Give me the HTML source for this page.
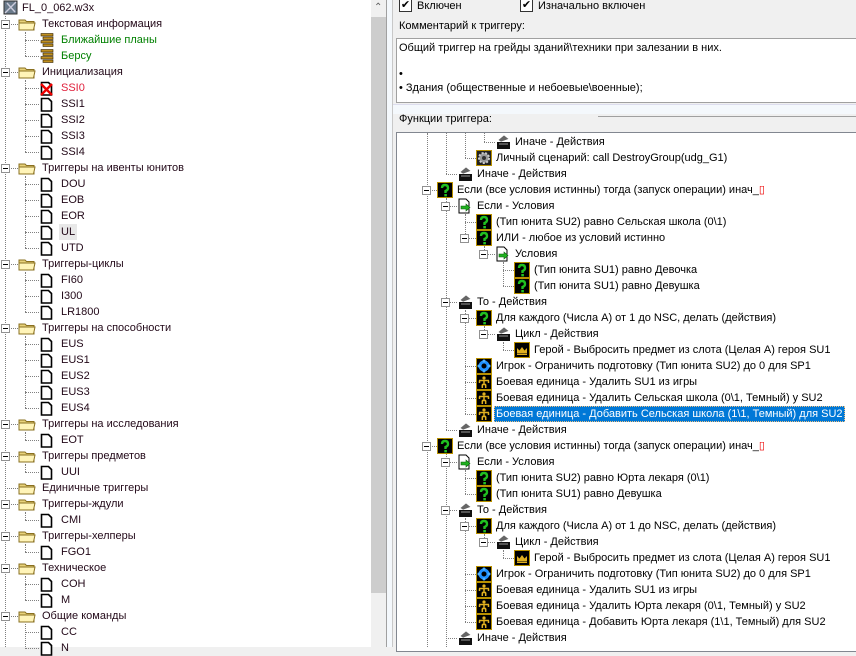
<!DOCTYPE html>
<html><head><meta charset="utf-8"><style>
*{margin:0;padding:0;box-sizing:border-box}
body{width:856px;height:647px;overflow:hidden;position:relative;background:#f0f0f0;font-family:"Liberation Sans",sans-serif;font-size:11px;color:#000}
.a{position:absolute}
.r{position:absolute;display:flex;align-items:center;height:16px;white-space:nowrap}
.r svg{width:16px;height:16px;flex:none}
.r span{margin-left:4px;line-height:16px}
.L{color:#220818}
.L span{margin-left:6px}
.v{position:absolute;width:0;border-left:1px dotted #808080}
.h{position:absolute;height:0;border-top:1px dotted #808080}
.b{position:absolute;width:9px;height:9px;border:1px solid #919191;background:#fff}
.b:after{content:"";position:absolute;left:1px;top:3px;width:5px;height:1px;background:#000}
</style></head><body>
<svg width="0" height="0" style="position:absolute"><defs>
<symbol id="q" viewBox="0 0 16 16"><rect width="16" height="16" fill="#b89000"/><rect x="1" y="1" width="14" height="14" fill="#000"/><path d="M5 6Q5 3 8 3Q11 3 11 6Q11 8 8.5 9V11" stroke="#20c020" stroke-width="2.4" fill="none"/><rect x="7.3" y="12" width="2.6" height="2.4" fill="#20c020"/></symbol>
<symbol id="u" viewBox="0 0 16 16"><rect width="16" height="16" fill="#b89000"/><rect x="1" y="1" width="14" height="14" fill="#000"/><circle cx="8" cy="4" r="1.6" fill="#e0b020"/><path d="M3 6.5H13M3.5 6.5V9M12.5 6.5V9M8 6V10.5M6 10.5H10M6.3 10.5V14M9.7 10.5V14" stroke="#e0b020" stroke-width="1.5" fill="none"/></symbol>
<symbol id="g" viewBox="0 0 16 16"><rect width="16" height="16" fill="#b89000"/><rect x="1" y="1" width="14" height="14" fill="#222"/><circle cx="8" cy="8" r="5" fill="#999" stroke="#ccc" stroke-dasharray="2 1.5" stroke-width="2"/><circle cx="8" cy="8" r="2" fill="#333"/></symbol>
<symbol id="p" viewBox="0 0 16 16"><rect width="16" height="16" fill="#b89000"/><rect x="1" y="1" width="14" height="14" fill="#000"/><circle cx="8" cy="8" r="4" fill="none" stroke="#1e90ff" stroke-width="3"/><circle cx="8" cy="3" r="1.5" fill="#4db0ff"/><circle cx="3" cy="8" r="1.5" fill="#4db0ff"/><circle cx="13" cy="8" r="1.5" fill="#4db0ff"/><circle cx="8" cy="13" r="1.5" fill="#4db0ff"/></symbol>
<symbol id="hr" viewBox="0 0 16 16"><rect width="16" height="16" fill="#b89000"/><rect x="1" y="1" width="14" height="14" fill="#000"/><path d="M3 11V6L5.5 8.5L8 5L10.5 8.5L13 6V11Z" fill="#e0b020"/><rect x="3" y="11.5" width="10" height="1.5" fill="#e0b020"/></symbol>
<symbol id="c" viewBox="0 0 16 16"><path d="M9 1L14 5L6 8L3 6Z" fill="#666" stroke="#fff" stroke-width=".6"/><rect x="2" y="8" width="13" height="7" fill="#111"/><rect x="4" y="9" width="9" height="2" fill="#555"/></symbol>
<symbol id="k" viewBox="0 0 16 16"><path d="M2 1H9L12 4V15H2Z" fill="#fff" stroke="#000"/><path d="M4 8H9V6L13 9.5L9 13V11H4Z" fill="#20b020" stroke="#086008" stroke-width=".6"/></symbol>
<symbol id="pg" viewBox="0 0 16 16"><path d="M2.5 2.5H9.5L12.5 5.5V15H2.5Z" fill="#fff" stroke="#000" stroke-width="1.6"/></symbol>
<symbol id="px" viewBox="0 0 16 16"><path d="M2.5 2.5H9.5L12.5 5.5V15H2.5Z" fill="#fff" stroke="#000" stroke-width="1.6"/><path d="M2 4L13 15M13 4L2 15" stroke="#e00" stroke-width="2.4"/></symbol>
<symbol id="f" viewBox="0 0 18 16"><path d="M1 4H7L8.5 5.5H16V14H1Z" fill="#e8d27a" stroke="#8a7020"/><path d="M1 7H17L15.5 14H1Z" fill="#fff4b8" stroke="#8a7020"/></symbol>
<symbol id="t" viewBox="0 0 16 16"><rect x="2" y="1.5" width="12" height="2.5" fill="#c09020" stroke="#302000" stroke-width=".6"/><rect x="4" y="5" width="10" height="2.5" fill="#c09020" stroke="#302000" stroke-width=".6"/><rect x="2" y="8.5" width="12" height="2.5" fill="#c09020" stroke="#302000" stroke-width=".6"/><rect x="4" y="12" width="10" height="2.5" fill="#c09020" stroke="#302000" stroke-width=".6"/></symbol>
<symbol id="w" viewBox="0 0 16 16"><rect x="2" y="1" width="13" height="13" fill="#6a7a8a" stroke="#333"/><path d="M3 13L14 2M5 3L13 12" stroke="#ccd" stroke-width="1.4"/></symbol>
</defs></svg>

<div class="a" style="left:0;top:0;width:371px;height:647px;background:#fff"></div>
<div class="a" style="left:371px;top:0;width:15px;height:647px;background:#f0f0f0"></div>
<div class="a" style="left:371px;top:17px;width:15px;height:576px;background:#cdcdcd"></div>
<div class="a" style="left:374px;top:2px;font-size:10px;color:#606060">&#8963;</div>
<div class="a" style="left:386px;top:0;width:1px;height:647px;background:#a0a0a0"></div>
<div class="a" style="left:387px;top:0;width:5px;height:647px;background:#f4f8fc"></div>
<div class="a" style="left:392px;top:0;width:1px;height:647px;background:#c8c8c8"></div>

<div class="v" style="left:5px;top:16px;height:631px"></div>
<div class="v" style="left:25px;top:32px;height:24px"></div>
<div class="v" style="left:25px;top:80px;height:72px"></div>
<div class="v" style="left:25px;top:176px;height:72px"></div>
<div class="v" style="left:25px;top:272px;height:40px"></div>
<div class="v" style="left:25px;top:336px;height:72px"></div>
<div class="v" style="left:25px;top:432px;height:8px"></div>
<div class="v" style="left:25px;top:464px;height:8px"></div>
<div class="v" style="left:25px;top:512px;height:8px"></div>
<div class="v" style="left:25px;top:544px;height:8px"></div>
<div class="v" style="left:25px;top:576px;height:24px"></div>
<div class="v" style="left:25px;top:624px;height:23px"></div>

<div class="r L" style="left:2px;top:0"><svg><use href="#w"/></svg><span style="margin-left:4px">FL_0_062.w3x</span></div>

<div class="h" style="left:5px;top:24px;width:13px"></div><div class="b" style="left:1px;top:20px"></div>
<div class="r L" style="left:18px;top:16px"><svg style="width:18px"><use href="#f"/></svg><span>Текстовая информация</span></div>
<div class="h" style="left:25px;top:40px;width:14px"></div><div class="r" style="left:39px;top:32px;color:#008000"><svg><use href="#t"/></svg><span style="margin-left:6px">Ближайшие планы</span></div>
<div class="h" style="left:25px;top:56px;width:14px"></div><div class="r" style="left:39px;top:48px;color:#008000"><svg><use href="#t"/></svg><span style="margin-left:6px">Берсу</span></div>

<div class="h" style="left:5px;top:72px;width:13px"></div><div class="b" style="left:1px;top:68px"></div>
<div class="r L" style="left:18px;top:64px"><svg style="width:18px"><use href="#f"/></svg><span>Инициализация</span></div>
<div class="h" style="left:25px;top:88px;width:14px"></div><div class="r" style="left:39px;top:80px;color:#e0203c"><svg><use href="#px"/></svg><span style="margin-left:6px">SSI0</span></div>
<div class="h" style="left:25px;top:104px;width:14px"></div><div class="r L" style="left:39px;top:96px"><svg><use href="#pg"/></svg><span>SSI1</span></div>
<div class="h" style="left:25px;top:120px;width:14px"></div><div class="r L" style="left:39px;top:112px"><svg><use href="#pg"/></svg><span>SSI2</span></div>
<div class="h" style="left:25px;top:136px;width:14px"></div><div class="r L" style="left:39px;top:128px"><svg><use href="#pg"/></svg><span>SSI3</span></div>
<div class="h" style="left:25px;top:152px;width:14px"></div><div class="r L" style="left:39px;top:144px"><svg><use href="#pg"/></svg><span>SSI4</span></div>

<div class="h" style="left:5px;top:168px;width:13px"></div><div class="b" style="left:1px;top:164px"></div>
<div class="r L" style="left:18px;top:160px"><svg style="width:18px"><use href="#f"/></svg><span>Триггеры на ивенты юнитов</span></div>
<div class="h" style="left:25px;top:184px;width:14px"></div><div class="r L" style="left:39px;top:176px"><svg><use href="#pg"/></svg><span>DOU</span></div>
<div class="h" style="left:25px;top:200px;width:14px"></div><div class="r L" style="left:39px;top:192px"><svg><use href="#pg"/></svg><span>EOB</span></div>
<div class="h" style="left:25px;top:216px;width:14px"></div><div class="r L" style="left:39px;top:208px"><svg><use href="#pg"/></svg><span>EOR</span></div>
<div class="h" style="left:25px;top:232px;width:14px"></div><div class="r L" style="left:39px;top:224px"><svg><use href="#pg"/></svg><span style="background:#e8e8e8;padding:0 2px;margin-left:4px">UL</span></div>
<div class="h" style="left:25px;top:248px;width:14px"></div><div class="r L" style="left:39px;top:240px"><svg><use href="#pg"/></svg><span>UTD</span></div>

<div class="h" style="left:5px;top:264px;width:13px"></div><div class="b" style="left:1px;top:260px"></div>
<div class="r L" style="left:18px;top:256px"><svg style="width:18px"><use href="#f"/></svg><span>Триггеры-циклы</span></div>
<div class="h" style="left:25px;top:280px;width:14px"></div><div class="r L" style="left:39px;top:272px"><svg><use href="#pg"/></svg><span>FI60</span></div>
<div class="h" style="left:25px;top:296px;width:14px"></div><div class="r L" style="left:39px;top:288px"><svg><use href="#pg"/></svg><span>I300</span></div>
<div class="h" style="left:25px;top:312px;width:14px"></div><div class="r L" style="left:39px;top:304px"><svg><use href="#pg"/></svg><span>LR1800</span></div>

<div class="h" style="left:5px;top:328px;width:13px"></div><div class="b" style="left:1px;top:324px"></div>
<div class="r L" style="left:18px;top:320px"><svg style="width:18px"><use href="#f"/></svg><span>Триггеры на способности</span></div>
<div class="h" style="left:25px;top:344px;width:14px"></div><div class="r L" style="left:39px;top:336px"><svg><use href="#pg"/></svg><span>EUS</span></div>
<div class="h" style="left:25px;top:360px;width:14px"></div><div class="r L" style="left:39px;top:352px"><svg><use href="#pg"/></svg><span>EUS1</span></div>
<div class="h" style="left:25px;top:376px;width:14px"></div><div class="r L" style="left:39px;top:368px"><svg><use href="#pg"/></svg><span>EUS2</span></div>
<div class="h" style="left:25px;top:392px;width:14px"></div><div class="r L" style="left:39px;top:384px"><svg><use href="#pg"/></svg><span>EUS3</span></div>
<div class="h" style="left:25px;top:408px;width:14px"></div><div class="r L" style="left:39px;top:400px"><svg><use href="#pg"/></svg><span>EUS4</span></div>

<div class="h" style="left:5px;top:424px;width:13px"></div><div class="b" style="left:1px;top:420px"></div>
<div class="r L" style="left:18px;top:416px"><svg style="width:18px"><use href="#f"/></svg><span>Триггеры на исследования</span></div>
<div class="h" style="left:25px;top:440px;width:14px"></div><div class="r L" style="left:39px;top:432px"><svg><use href="#pg"/></svg><span>EOT</span></div>

<div class="h" style="left:5px;top:456px;width:13px"></div><div class="b" style="left:1px;top:452px"></div>
<div class="r L" style="left:18px;top:448px"><svg style="width:18px"><use href="#f"/></svg><span>Триггеры предметов</span></div>
<div class="h" style="left:25px;top:472px;width:14px"></div><div class="r L" style="left:39px;top:464px"><svg><use href="#pg"/></svg><span>UUI</span></div>

<div class="h" style="left:5px;top:488px;width:13px"></div>
<div class="r L" style="left:18px;top:480px"><svg style="width:18px"><use href="#f"/></svg><span>Единичные триггеры</span></div>

<div class="h" style="left:5px;top:504px;width:13px"></div><div class="b" style="left:1px;top:500px"></div>
<div class="r L" style="left:18px;top:496px"><svg style="width:18px"><use href="#f"/></svg><span>Триггеры-ждули</span></div>
<div class="h" style="left:25px;top:520px;width:14px"></div><div class="r L" style="left:39px;top:512px"><svg><use href="#pg"/></svg><span>CMI</span></div>

<div class="h" style="left:5px;top:536px;width:13px"></div><div class="b" style="left:1px;top:532px"></div>
<div class="r L" style="left:18px;top:528px"><svg style="width:18px"><use href="#f"/></svg><span>Триггеры-хелперы</span></div>
<div class="h" style="left:25px;top:552px;width:14px"></div><div class="r L" style="left:39px;top:544px"><svg><use href="#pg"/></svg><span>FGO1</span></div>

<div class="h" style="left:5px;top:568px;width:13px"></div><div class="b" style="left:1px;top:564px"></div>
<div class="r L" style="left:18px;top:560px"><svg style="width:18px"><use href="#f"/></svg><span>Техническое</span></div>
<div class="h" style="left:25px;top:584px;width:14px"></div><div class="r L" style="left:39px;top:576px"><svg><use href="#pg"/></svg><span>COH</span></div>
<div class="h" style="left:25px;top:600px;width:14px"></div><div class="r L" style="left:39px;top:592px"><svg><use href="#pg"/></svg><span>M</span></div>

<div class="h" style="left:5px;top:616px;width:13px"></div><div class="b" style="left:1px;top:612px"></div>
<div class="r L" style="left:18px;top:608px"><svg style="width:18px"><use href="#f"/></svg><span>Общие команды</span></div>
<div class="h" style="left:25px;top:632px;width:14px"></div><div class="r L" style="left:39px;top:624px"><svg><use href="#pg"/></svg><span>CC</span></div>
<div class="h" style="left:25px;top:648px;width:14px"></div><div class="r L" style="left:39px;top:640px"><svg><use href="#pg"/></svg><span>N</span></div>

<div class="a" style="left:399px;top:-1px;width:13px;height:13px;border:1px solid #333;background:#fff;font-size:11px;line-height:11px;text-align:center">&#10004;</div>
<div class="a" style="left:417px;top:0">Включен</div>
<div class="a" style="left:520px;top:-1px;width:13px;height:13px;border:1px solid #333;background:#fff;font-size:11px;line-height:11px;text-align:center">&#10004;</div>
<div class="a" style="left:538px;top:0">Изначально включен</div>
<div class="a" style="left:399px;top:20px">Комментарий к триггеру:</div>
<div class="a" style="left:396px;top:38px;width:470px;height:65px;background:#fff;border:1px solid #a0a0a0"></div>
<div class="a" style="left:399px;top:42px">Общий триггер на грейды зданий\техники при залезании в них.</div>
<div class="a" style="left:399px;top:68px">•</div>
<div class="a" style="left:399px;top:82px">• Здания (общественные и небоевые\военные);</div>
<div class="a" style="left:393px;top:104px;width:470px;height:10px;background:#f4f8fc;border-top:1px solid #dde"></div>
<div class="a" style="left:598px;top:116px;width:260px;height:1px;background:#a0a0a0"></div>
<div class="a" style="left:399px;top:113px">Функции триггера:</div>
<div class="a" style="left:396px;top:132px;width:470px;height:520px;background:#fff;border:1px solid #828790"></div>

<div class="v" style="left:427px;top:133px;height:514px"></div>
<div class="v" style="left:446px;top:133px;height:41px"></div>
<div class="v" style="left:446px;top:198px;height:232px"></div>
<div class="v" style="left:446px;top:454px;height:193px"></div>
<div class="v" style="left:465px;top:133px;height:25px"></div>
<div class="v" style="left:465px;top:214px;height:24px"></div>
<div class="v" style="left:465px;top:310px;height:104px"></div>
<div class="v" style="left:465px;top:470px;height:24px"></div>
<div class="v" style="left:465px;top:518px;height:104px"></div>
<div class="v" style="left:484px;top:133px;height:9px"></div>
<div class="v" style="left:484px;top:246px;height:8px"></div>
<div class="v" style="left:484px;top:326px;height:8px"></div>
<div class="v" style="left:484px;top:534px;height:8px"></div>
<div class="v" style="left:503px;top:262px;height:24px"></div>
<div class="v" style="left:503px;top:342px;height:8px"></div>
<div class="v" style="left:503px;top:550px;height:8px"></div>

<div class="h" style="left:484px;top:142px;width:11px"></div>
<div class="h" style="left:465px;top:158px;width:11px"></div>
<div class="h" style="left:446px;top:174px;width:11px"></div>
<div class="h" style="left:427px;top:190px;width:10px"></div>
<div class="h" style="left:446px;top:206px;width:11px"></div>
<div class="h" style="left:465px;top:222px;width:11px"></div>
<div class="h" style="left:465px;top:238px;width:11px"></div>
<div class="h" style="left:484px;top:254px;width:11px"></div>
<div class="h" style="left:503px;top:270px;width:11px"></div>
<div class="h" style="left:503px;top:286px;width:11px"></div>
<div class="h" style="left:446px;top:302px;width:11px"></div>
<div class="h" style="left:465px;top:318px;width:11px"></div>
<div class="h" style="left:484px;top:334px;width:11px"></div>
<div class="h" style="left:503px;top:350px;width:11px"></div>
<div class="h" style="left:465px;top:366px;width:11px"></div>
<div class="h" style="left:465px;top:382px;width:11px"></div>
<div class="h" style="left:465px;top:398px;width:11px"></div>
<div class="h" style="left:465px;top:414px;width:11px"></div>
<div class="h" style="left:446px;top:430px;width:11px"></div>
<div class="h" style="left:427px;top:446px;width:10px"></div>
<div class="h" style="left:446px;top:462px;width:11px"></div>
<div class="h" style="left:465px;top:478px;width:11px"></div>
<div class="h" style="left:465px;top:494px;width:11px"></div>
<div class="h" style="left:446px;top:510px;width:11px"></div>
<div class="h" style="left:465px;top:526px;width:11px"></div>
<div class="h" style="left:484px;top:542px;width:11px"></div>
<div class="h" style="left:503px;top:558px;width:11px"></div>
<div class="h" style="left:465px;top:574px;width:11px"></div>
<div class="h" style="left:465px;top:590px;width:11px"></div>
<div class="h" style="left:465px;top:606px;width:11px"></div>
<div class="h" style="left:465px;top:622px;width:11px"></div>
<div class="h" style="left:446px;top:638px;width:11px"></div>

<div class="b" style="left:422px;top:186px"></div>
<div class="b" style="left:441px;top:202px"></div>
<div class="b" style="left:460px;top:234px"></div>
<div class="b" style="left:479px;top:250px"></div>
<div class="b" style="left:441px;top:298px"></div>
<div class="b" style="left:460px;top:314px"></div>
<div class="b" style="left:479px;top:330px"></div>
<div class="b" style="left:422px;top:442px"></div>
<div class="b" style="left:441px;top:458px"></div>
<div class="b" style="left:441px;top:506px"></div>
<div class="b" style="left:460px;top:522px"></div>
<div class="b" style="left:479px;top:538px"></div>

<div class="r" style="left:495px;top:134px"><svg><use href="#c"/></svg><span>Иначе - Действия</span></div>
<div class="r" style="left:476px;top:150px"><svg><use href="#g"/></svg><span>Личный сценарий: call DestroyGroup(udg_G1)</span></div>
<div class="r" style="left:457px;top:166px"><svg><use href="#c"/></svg><span>Иначе - Действия</span></div>
<div class="r" style="left:437px;top:182px"><svg><use href="#q"/></svg><span>Если (все условия истинны) тогда (запуск операции) инач_<b style="color:#e00;font-weight:normal">▯</b></span></div>
<div class="r" style="left:457px;top:198px"><svg><use href="#k"/></svg><span>Если - Условия</span></div>
<div class="r" style="left:476px;top:214px"><svg><use href="#q"/></svg><span>(Тип юнита SU2) равно Сельская школа (0\1)</span></div>
<div class="r" style="left:476px;top:230px"><svg><use href="#q"/></svg><span>ИЛИ - любое из условий истинно</span></div>
<div class="r" style="left:495px;top:246px"><svg><use href="#k"/></svg><span>Условия</span></div>
<div class="r" style="left:514px;top:262px"><svg><use href="#q"/></svg><span>(Тип юнита SU1) равно Девочка</span></div>
<div class="r" style="left:514px;top:278px"><svg><use href="#q"/></svg><span>(Тип юнита SU1) равно Девушка</span></div>
<div class="r" style="left:457px;top:294px"><svg><use href="#c"/></svg><span>То - Действия</span></div>
<div class="r" style="left:476px;top:310px"><svg><use href="#q"/></svg><span>Для каждого (Числа A) от 1 до NSC, делать (действия)</span></div>
<div class="r" style="left:495px;top:326px"><svg><use href="#c"/></svg><span>Цикл - Действия</span></div>
<div class="r" style="left:514px;top:342px"><svg><use href="#hr"/></svg><span>Герой - Выбросить предмет из слота (Целая A) героя SU1</span></div>
<div class="r" style="left:476px;top:358px"><svg><use href="#p"/></svg><span>Игрок - Ограничить подготовку (Тип юнита SU2) до 0 для SP1</span></div>
<div class="r" style="left:476px;top:374px"><svg><use href="#u"/></svg><span>Боевая единица - Удалить SU1 из игры</span></div>
<div class="r" style="left:476px;top:390px"><svg><use href="#u"/></svg><span>Боевая единица - Удалить Сельская школа (0\1, Темный) у SU2</span></div>
<div class="r" style="left:476px;top:406px"><svg><use href="#u"/></svg><span style="margin-left:2px;padding:0 2px;background:#0078d7;color:#fff;outline:1px dotted #f0c080;outline-offset:-1px">Боевая единица - Добавить Сельская школа (1\1, Темный) для SU2</span></div>
<div class="r" style="left:457px;top:422px"><svg><use href="#c"/></svg><span>Иначе - Действия</span></div>
<div class="r" style="left:437px;top:438px"><svg><use href="#q"/></svg><span>Если (все условия истинны) тогда (запуск операции) инач_<b style="color:#e00;font-weight:normal">▯</b></span></div>
<div class="r" style="left:457px;top:454px"><svg><use href="#k"/></svg><span>Если - Условия</span></div>
<div class="r" style="left:476px;top:470px"><svg><use href="#q"/></svg><span>(Тип юнита SU2) равно Юрта лекаря (0\1)</span></div>
<div class="r" style="left:476px;top:486px"><svg><use href="#q"/></svg><span>(Тип юнита SU1) равно Девушка</span></div>
<div class="r" style="left:457px;top:502px"><svg><use href="#c"/></svg><span>То - Действия</span></div>
<div class="r" style="left:476px;top:518px"><svg><use href="#q"/></svg><span>Для каждого (Числа A) от 1 до NSC, делать (действия)</span></div>
<div class="r" style="left:495px;top:534px"><svg><use href="#c"/></svg><span>Цикл - Действия</span></div>
<div class="r" style="left:514px;top:550px"><svg><use href="#hr"/></svg><span>Герой - Выбросить предмет из слота (Целая A) героя SU1</span></div>
<div class="r" style="left:476px;top:566px"><svg><use href="#p"/></svg><span>Игрок - Ограничить подготовку (Тип юнита SU2) до 0 для SP1</span></div>
<div class="r" style="left:476px;top:582px"><svg><use href="#u"/></svg><span>Боевая единица - Удалить SU1 из игры</span></div>
<div class="r" style="left:476px;top:598px"><svg><use href="#u"/></svg><span>Боевая единица - Удалить Юрта лекаря (0\1, Темный) у SU2</span></div>
<div class="r" style="left:476px;top:614px"><svg><use href="#u"/></svg><span>Боевая единица - Добавить Юрта лекаря (1\1, Темный) для SU2</span></div>
<div class="r" style="left:457px;top:630px"><svg><use href="#c"/></svg><span>Иначе - Действия</span></div>
</body></html>
